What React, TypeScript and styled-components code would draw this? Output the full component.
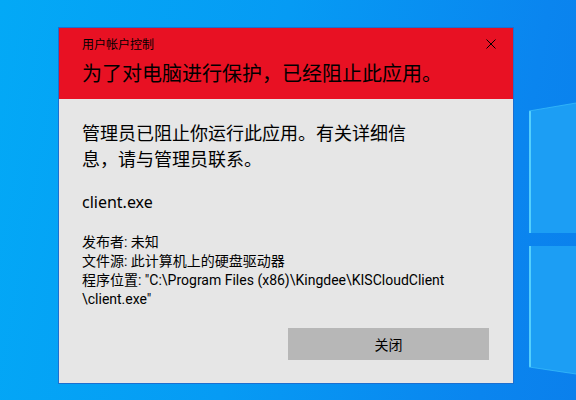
import { createGlobalStyle, styled } from 'styled-components';

const GlobalStyle = createGlobalStyle`
    html, body {
        margin: 0;
        padding: 0;
    }
    body {
        font-family: 'Noto Sans', 'Noto Sans CJK SC', sans-serif;
        color: #000;
    }
`;

const Desktop = styled.div`
    position: relative;
    width: 576px;
    height: 400px;
    overflow: hidden;
    background: linear-gradient(100deg, #03a9f6 0%, #069bf4 45%, #0a85ef 85%, #0b80ec 100%);
    padding: 27px 0 0 58px;
    box-sizing: border-box;
`;

const Wallpaper = styled.svg`
    position: absolute;
    inset: 0;
    z-index: 0;
`;

const Dialog = styled.div`
    position: relative;
    z-index: 1;
    width: 456px;
    height: 357px;
    box-sizing: border-box;
    border: 1px solid #1c6fd0;
    background: #e6e6e6;
    display: flex;
    flex-direction: column;
`;

const Header = styled.div`
    position: relative;
    background: #e81123;
    padding: 9px 24px 10px 23px;
    height: 71px;
    box-sizing: border-box;
`;

const Caption = styled.div`
    font-size: 12px;
    line-height: 16px;
`;

const Headline = styled.div`
    margin-top: 7px;
    font-size: 20px;
    line-height: 28px;
`;

const CloseX = styled.button`
    position: absolute;
    top: 11px;
    right: 17px;
    width: 10px;
    height: 10px;
    padding: 0;
    border: 0;
    background: transparent;
    display: flex;
`;

const Body = styled.div`
    flex: 1;
    display: flex;
    flex-direction: column;
    padding: 21px 24px 23px 23px;
`;

const Message = styled.div`
    max-width: 335px;
    font-size: 18px;
    line-height: 26px;
`;

const FileName = styled.div`
    margin-top: 19px;
    font-size: 16px;
    line-height: 22px;
`;

const Details = styled.div`
    margin-top: 20px;
    font-family: Roboto, 'Noto Sans CJK SC', sans-serif;
    font-size: 14px;
    line-height: 19px;
`;

const Footer = styled.div`
    margin-top: auto;
    display: flex;
    justify-content: flex-end;
`;

const Button = styled.button`
    width: 201px;
    height: 32px;
    border: 0;
    background: #b7b7b7;
    font-family: 'Noto Sans', 'Noto Sans CJK SC', sans-serif;
    font-size: 14px;
    color: #000;
`;

export default function App() {
    return (
        <>
            <GlobalStyle />
            <Desktop>
                <Wallpaper width="576" height="400" viewBox="0 0 576 400">
                    <polygon points="529,111 576,103 576,233 529,233" fill="#1c9ef4" />
                    <polygon points="529,246 576,246 576,374 529,367" fill="#1c9ef4" />
                    <line x1="530" y1="111" x2="530" y2="233" stroke="#62dcff" strokeWidth="2" opacity="0.8" />
                    <line x1="530" y1="246" x2="530" y2="367" stroke="#62dcff" strokeWidth="2" opacity="0.8" />
                    <line x1="529" y1="111" x2="576" y2="103" stroke="#3cc0fb" strokeWidth="1" opacity="0.7" />
                    <line x1="529" y1="367" x2="576" y2="374" stroke="#3cc0fb" strokeWidth="1" opacity="0.7" />
                </Wallpaper>
                <Dialog>
                    <Header>
                        <Caption>用户帐户控制</Caption>
                        <Headline>为了对电脑进行保护，已经阻止此应用。</Headline>
                        <CloseX aria-label="关闭">
                            <svg width="10" height="10" viewBox="0 0 10 10">
                                <path d="M0.5 0.5 L9.5 9.5 M9.5 0.5 L0.5 9.5" stroke="#000" strokeWidth="1" />
                            </svg>
                        </CloseX>
                    </Header>
                    <Body>
                        <Message>管理员已阻止你运行此应用。有关详细信息，请与管理员联系。</Message>
                        <FileName>client.exe</FileName>
                        <Details>
                            <div>发布者: 未知</div>
                            <div>文件源: 此计算机上的硬盘驱动器</div>
                            <div>
                                程序位置: "C:\Program Files (x86)\Kingdee\KISCloudClient
                                <br />
                                \client.exe"
                            </div>
                        </Details>
                        <Footer>
                            <Button>关闭</Button>
                        </Footer>
                    </Body>
                </Dialog>
            </Desktop>
        </>
    );
}
